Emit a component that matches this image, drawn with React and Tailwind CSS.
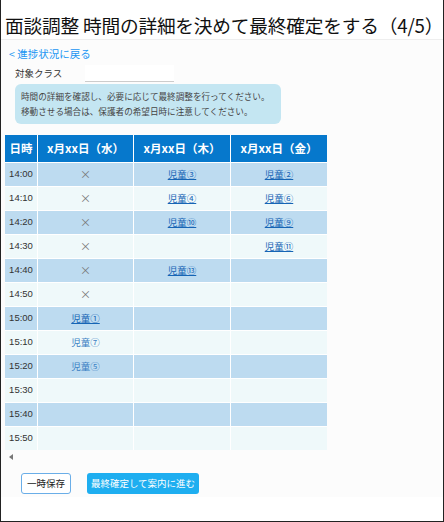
import React from 'react';

const days = ['x月xx日（水）', 'x月xx日（木）', 'x月xx日（金）'];

const times = ['14:00', '14:10', '14:20', '14:30', '14:40', '14:50', '15:00', '15:10', '15:20', '15:30', '15:40', '15:50'];

// cell content per time: [水, 木, 金]
const slots = {
  '14:00': ['x', '児童③', '児童②'],
  '14:10': ['x', '児童④', '児童⑥'],
  '14:20': ['x', '児童⑩', '児童⑨'],
  '14:30': ['x', '', '児童⑪'],
  '14:40': ['x', '児童⑬', ''],
  '14:50': ['x', '', ''],
  '15:00': ['card:児童①', '', ''],
  '15:10': ['drag:児童⑦', '', ''],
  '15:20': ['drag:児童⑤', '', ''],
};

function Cell({ value }) {
  if (!value) return null;
  if (value === 'x') return <span className="text-[11px] text-[#777]">×</span>;
  if (value.startsWith('card:')) {
    return (
      <span className="text-[9.5px] text-[#1665b5] underline underline-offset-[1px]">{value.slice(5)}</span>
    );
  }
  if (value.startsWith('drag:')) {
    return <span className="text-[9.5px] text-[#3b7fc4]">{value.slice(5)}</span>;
  }
  return (
    <span className="text-[9.5px] text-[#1665b5] underline underline-offset-[1px]">{value}</span>
  );
}

export default function App() {
  return (
    <div className="w-[444px] h-[522px] bg-white border-x border-b border-[#222] font-['Noto_Sans_CJK_JP',sans-serif] overflow-hidden">
      <div className="bg-[#fcfcfc]">
        {/* Title */}
        <div className="h-[40px] bg-white border-b border-[#eeeeee] pl-[4px] pt-[11px]">
          <h1 className="text-[18.7px] leading-[27px] text-[#111] whitespace-nowrap tracking-[-0.2px]">
            面談調整 時間の詳細を決めて最終確定をする（4/5）
          </h1>
        </div>

        {/* Back link */}
        <div className="pl-[8px] pt-[6px] text-[10.5px] leading-[15px]">
          <a className="text-[#2196f3]">&lt; 進捗状況に戻る</a>
        </div>

        {/* Class selector */}
        <div className="flex items-center h-[18px] mt-[3px] pl-[14px]">
          <span className="w-[70px] text-[9.5px] text-[#333]">対象クラス</span>
          <div className="w-[89px] h-[17px] bg-white border-b border-[#cccccc]" />
        </div>

        {/* Info box */}
        <div className="ml-[14px] mt-[2px] w-[266px] h-[40px] rounded-[6px] bg-[#c4e6f2] px-[6px] pt-[5px] text-[8.6px] leading-[15px] text-[#444] whitespace-nowrap">
          <p>時間の詳細を確認し、必要に応じて最終調整を行ってください。</p>
          <p>移動させる場合は、保護者の希望日時に注意してください。</p>
        </div>

        {/* Schedule table */}
        <div className="pl-[4px] mt-[11px]">
          <div className="grid grid-cols-[32px_95px_96px_96px] gap-px w-fit bg-white">
            <div className="h-[27px] bg-[#0678cc] flex items-center justify-center text-white font-bold text-[11.5px]">日時</div>
            {days.map((d) => (
              <div key={d} className="h-[27px] bg-[#0678cc] flex items-center justify-center text-white font-bold text-[11.5px]">
                {d}
              </div>
            ))}
            {times.map((t, i) => {
              const row = slots[t] || ['', '', ''];
              const bg = i % 2 === 0 ? 'bg-[#bddbf0]' : 'bg-[#eff9fa]';
              return (
                <React.Fragment key={t}>
                  <div className={`h-[23px] ${bg} flex items-center justify-center text-[9.5px] text-[#333] font-['Liberation_Sans',sans-serif]`}>
                    {t}
                  </div>
                  {row.map((v, j) => (
                    <div key={j} className={`h-[23px] ${bg} flex items-center justify-center`}>
                      <Cell value={v} />
                    </div>
                  ))}
                </React.Fragment>
              );
            })}
          </div>
          {/* scrollbar arrow */}
          <div className="h-[14px] flex items-center pl-[4px]">
            <span className="w-0 h-0 border-y-[3.5px] border-y-transparent border-r-[4px] border-r-[#777]" />
          </div>
        </div>

        {/* Buttons */}
        <div className="flex gap-[16px] pl-[20px] pt-[9px] pb-[3px]">
          <button className="w-[50px] h-[21px] bg-white border border-[#6aaee8] rounded-[3px] text-[9.5px] text-[#222]">
            一時保存
          </button>
          <button className="w-[112px] h-[21px] bg-[#1eaef0] rounded-[3px] text-[9.5px] text-white">
            最終確定して案内に進む
          </button>
        </div>
      </div>
    </div>
  );
}
